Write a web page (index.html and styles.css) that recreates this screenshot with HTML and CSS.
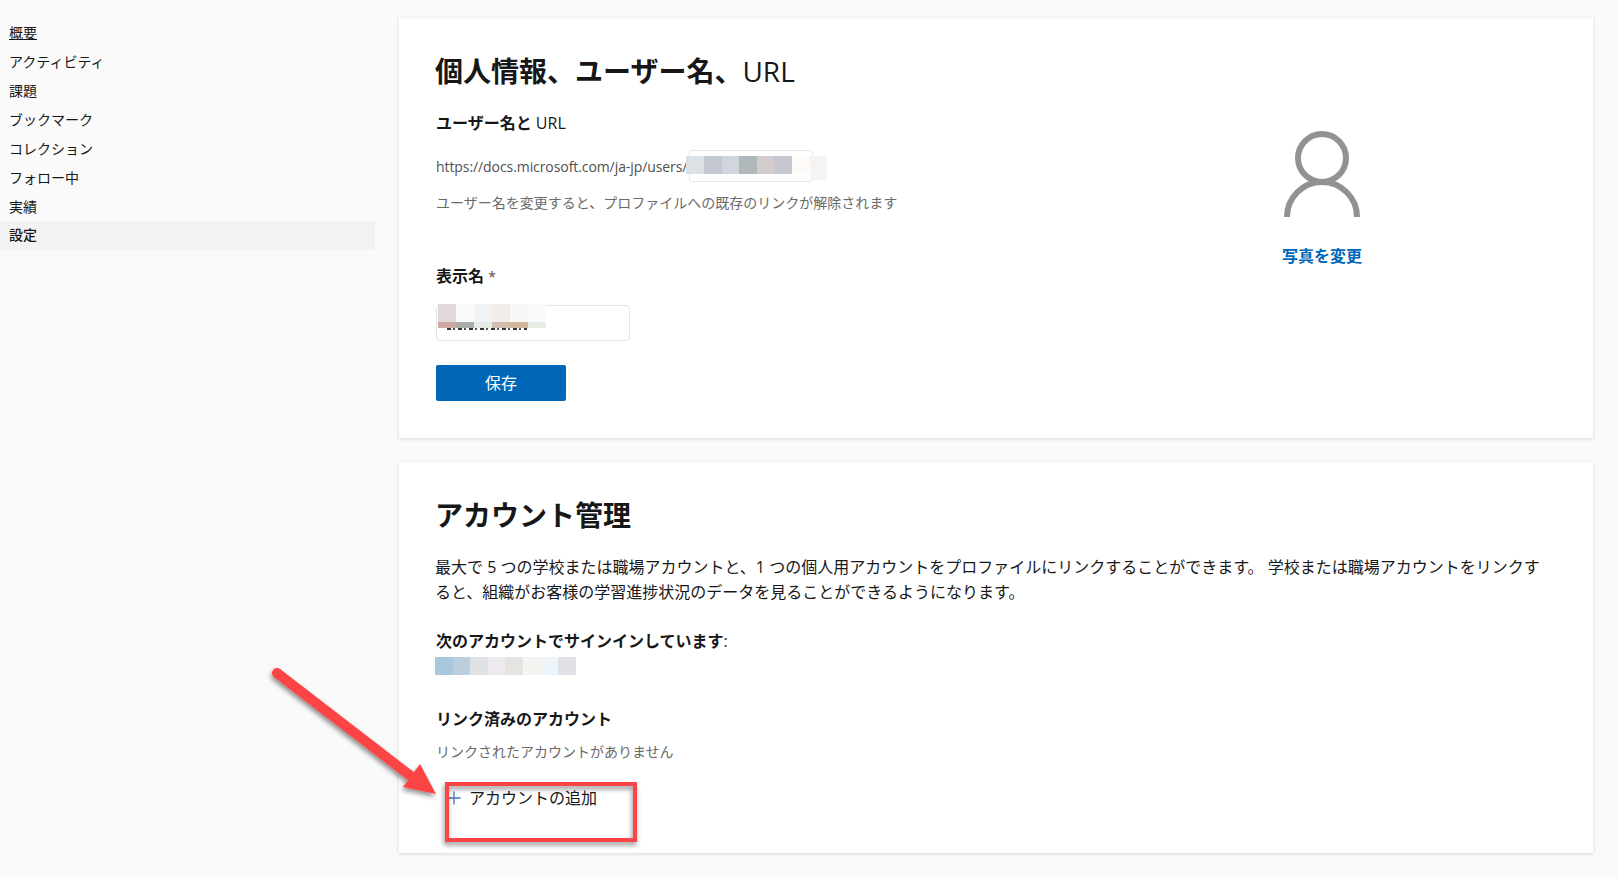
FILE: index.html
```html
<!DOCTYPE html>
<html lang="ja">
<head>
<meta charset="utf-8">
<title>設定</title>
<link rel="stylesheet" href="styles.css">
</head>
<body>
<div class="page">
  <nav class="sidebar">
    <a class="nav-item nav-underline">概要</a>
    <a class="nav-item">アクティビティ</a>
    <a class="nav-item">課題</a>
    <a class="nav-item">ブックマーク</a>
    <a class="nav-item">コレクション</a>
    <a class="nav-item">フォロー中</a>
    <a class="nav-item">実績</a>
    <a class="nav-item nav-selected">設定</a>
  </nav>
  <main class="main">
    <section class="card card-profile">
      <div class="profile-form">
        <h2 class="card-title">個人情報、ユーザー名、<span class="regular">URL</span></h2>
        <h3 class="field-label label-url">ユーザー名と <span class="regular">URL</span></h3>
        <div class="url-row">
          <span class="url-prefix">https://docs.microsoft.com/ja-jp/users/</span>
          <span class="url-input">
            <span class="mosaic mosaic-url">
              <i class="m-c1"></i><i class="m-c2"></i><i class="m-c3"></i><i class="m-c4"></i><i class="m-c5"></i><i class="m-c6"></i><i class="m-c7"></i><i class="m-c8"></i>
            </span>
          </span>
        </div>
        <p class="hint">ユーザー名を変更すると、プロファイルへの既存のリンクが解除されます</p>
        <h3 class="field-label label-name">表示名 <span class="req">*</span></h3>
        <div class="name-input">
          <span class="name-residue"></span>
          <span class="mosaic mosaic-name">
            <span class="mosaic-row"><i class="n-1"></i><i class="n-2"></i><i class="n-3"></i><i class="n-4"></i><i class="n-5"></i><i class="n-6"></i></span>
            <span class="mosaic-row thin"><i class="n-7"></i><i class="n-8"></i><i class="n-9"></i><i class="n-10"></i><i class="n-11"></i><i class="n-12"></i></span>
          </span>
        </div>
        <button class="save-btn" type="button">保存</button>
      </div>
      <div class="avatar-col">
        <svg class="avatar" width="78" height="88" viewBox="0 0 78 88" aria-hidden="true">
          <circle cx="39" cy="28" r="24" fill="none" stroke="#929292" stroke-width="6"/>
          <path d="M4 87 A35 35 0 0 1 74 87" fill="none" stroke="#929292" stroke-width="6"/>
        </svg>
        <a class="change-photo">写真を変更</a>
      </div>
    </section>
    <section class="card card-account">
      <h2 class="card-title">アカウント管理</h2>
      <p class="body-text">最大で 5 つの学校または職場アカウントと、1 つの個人用アカウントをプロファイルにリンクすることができます。 学校または職場アカウントをリンクすると、組織がお客様の学習進捗状況のデータを見ることができるようになります。</p>
      <h3 class="field-label label-signin">次のアカウントでサインインしています<span class="regular">:</span></h3>
      <div class="mosaic mosaic-account">
        <i class="a-1"></i><i class="a-2"></i><i class="a-3"></i><i class="a-4"></i><i class="a-5"></i><i class="a-6"></i><i class="a-7"></i><i class="a-8"></i>
      </div>
      <h3 class="field-label label-linked">リンク済みのアカウント</h3>
      <p class="hint hint-linked">リンクされたアカウントがありません</p>
      <a class="add-account">
        <svg class="plus" width="14" height="14" viewBox="0 0 14 14" aria-hidden="true"><path d="M7 0.500V13.500M0.500 7H13.500" stroke="#3f6fb5" stroke-width="1.300" fill="none"/></svg>
        <span>アカウントの追加</span>
      </a>
    </section>
  </main>
</div>
<svg class="annotation" width="1618" height="877" viewBox="0 0 1618 877" aria-hidden="true">
  <defs>
    <filter id="shadow" x="-20%" y="-20%" width="140%" height="140%">
      <feDropShadow dx="-1" dy="3" stdDeviation="2.500" flood-color="#000" flood-opacity="0.450"/>
    </filter>
  </defs>
  <g filter="url(#shadow)">
    <path d="M277 673 L412 777" stroke="#fb4444" stroke-width="10" stroke-linecap="round" fill="none"/>
    <path d="M436 794 L403 787 L420 764 Z" fill="#fb4444"/>
    <rect x="447" y="784" width="188" height="56" fill="none" stroke="#fb4444" stroke-width="4"/>
  </g>
</svg>
</body>
</html>
```
FILE: styles.css
```css
* { box-sizing: border-box; }
html, body { margin: 0; padding: 0; }
body {
  width: 1618px;
  height: 877px;
  overflow: hidden;
  background: #fafafa;
  color: #171717;
  font-family: "Open Sans", "Noto Sans CJK JP", sans-serif;
  font-size: 14px;
  position: relative;
}
.page {
  display: grid;
  grid-template-columns: 375px 1194px;
  column-gap: 24px;
}
.sidebar {
  display: flex;
  flex-direction: column;
  padding-top: 18px;
}
.nav-item {
  height: 29px;
  line-height: 29px;
  padding-left: 9px;
  font-size: 14px;
  color: #171717;
}
.nav-underline { text-decoration: underline; }
.nav-selected { background: #f2f2f2; font-weight: 500; line-height: 28px; }
.main {
  display: flex;
  flex-direction: column;
  gap: 24px;
  padding-top: 18px;
}
.card {
  background: #fff;
  box-shadow: 0 1px 4px rgba(0, 0, 0, 0.14);
  padding: 0 37px;
}
.card-profile {
  height: 420px;
  display: flex;
  justify-content: space-between;
}
.card-account { height: 391px; }
.card-title {
  margin: 0 0 0 -1px;
  padding-top: 33px;
  font-size: 28px;
  line-height: 40px;
  font-weight: 700;
}
.regular { font-weight: 400; }
.field-label {
  margin: 0;
  font-size: 16px;
  line-height: 22px;
  font-weight: 700;
}
.label-url { margin-top: 21px; }
.url-row {
  margin-top: 16px;
  display: flex;
  align-items: center;
  height: 32px;
}
.url-prefix { font-size: 14px; color: #505050; letter-spacing: -0.08px; }
.url-input {
  position: relative;
  display: block;
  width: 124px;
  height: 32px;
  border: 1px solid #e6e6e6;
  border-radius: 3px;
  margin-left: 2px;
}
.mosaic { display: flex; }
.mosaic i { display: block; height: 18px; }
.mosaic-url { position: absolute; left: -4px; top: 5px; }
.mosaic-url i { width: 17.600px; height: 18px; }
.m-c1 { background: #dce1e5; }
.m-c2 { background: #c4c9d1; }
.m-c3 { background: #d1d6de; }
.m-c4 { background: #b1b8bb; }
.m-c5 { background: #d3cbce; }
.m-c6 { background: #c8c7d1; }
.m-c7 { background: #fdfaf8; }
.mosaic-url .m-c8 { background: #f4f4f4; height: 24px; }
.hint { margin: 0; color: #6a6a6a; font-size: 14px; }
.profile-form .hint { margin-top: 9px; line-height: 24px; }
.label-name { margin-top: 50px; }
.req { font-weight: 400; font-size: 14px; color: #5c4a4a; }
.name-input {
  position: relative;
  margin-top: 17px;
  width: 194px;
  height: 36px;
  border: 1px solid #e3e3e3;
  border-radius: 4px;
}
.name-residue {
  position: absolute;
  left: 10px;
  top: 22px;
  width: 80px;
  height: 2px;
  background: repeating-linear-gradient(90deg, #333 0 4px, #fff 4px 6px, #555 6px 8px, #fff 8px 11px);
}
.mosaic-name {
  position: absolute;
  left: 1px;
  top: -2px;
  flex-direction: column;
}
.mosaic-row { display: flex; }
.mosaic-row i { width: 18px; height: 18px; }
.mosaic-row.thin i { height: 6px; }
.n-1 { background: #e0d9d9; }
.n-2 { background: #fafafa; }
.n-3 { background: #eff3f5; }
.n-4 { background: #f1ede8; }
.n-5 { background: #f9f8f6; }
.n-6 { background: #fafafa; }
.n-7 { background: #cfaaa0; }
.n-8 { background: #aaacaa; }
.n-9 { background: #e4ebe4; }
.n-10 { background: #cfbdb2; }
.n-11 { background: #d2b697; }
.n-12 { background: #e9eee4; }
.save-btn {
  display: block;
  margin-top: 24px;
  width: 130px;
  height: 36px;
  border: 0;
  border-radius: 2px;
  background: #0067b8;
  color: #fff;
  font: inherit;
  font-size: 16px;
  padding: 0 0 2px;
}
.avatar-col {
  display: flex;
  flex-direction: column;
  align-items: center;
  width: 80px;
  margin-right: 194px;
  padding-top: 112px;
}
.avatar { display: block; }
.change-photo {
  margin-top: 27px;
  font-size: 16px;
  line-height: 22px;
  font-weight: 700;
  color: #0067b8;
  white-space: nowrap;
}
.body-text {
  margin: 20px 10px 0 -1px;
  font-size: 16px;
  line-height: 25px;
  color: #171717;
}
.label-signin { margin-top: 25px; }
.mosaic-account { margin: 5px 0 0 -1px; }
.mosaic-account i { width: 17.600px; height: 18px; }
.a-1 { background: #a8c9dc; }
.a-2 { background: #bccede; }
.a-3 { background: #dfe1e3; }
.a-4 { background: #efe9f0; }
.a-5 { background: #e4e4e3; }
.a-6 { background: #f5f3ef; }
.a-7 { background: #edf5fa; }
.a-8 { background: #e0e0e7; }
.label-linked { margin-top: 33px; }
.hint-linked { margin-top: 10px; line-height: 24px; }
.add-account {
  display: flex;
  align-items: center;
  gap: 8px;
  margin: 22px 0 0 11px;
  font-size: 16px;
  line-height: 24px;
}
.plus { display: block; }
.annotation {
  position: absolute;
  left: 0;
  top: 0;
  pointer-events: none;
}
```
